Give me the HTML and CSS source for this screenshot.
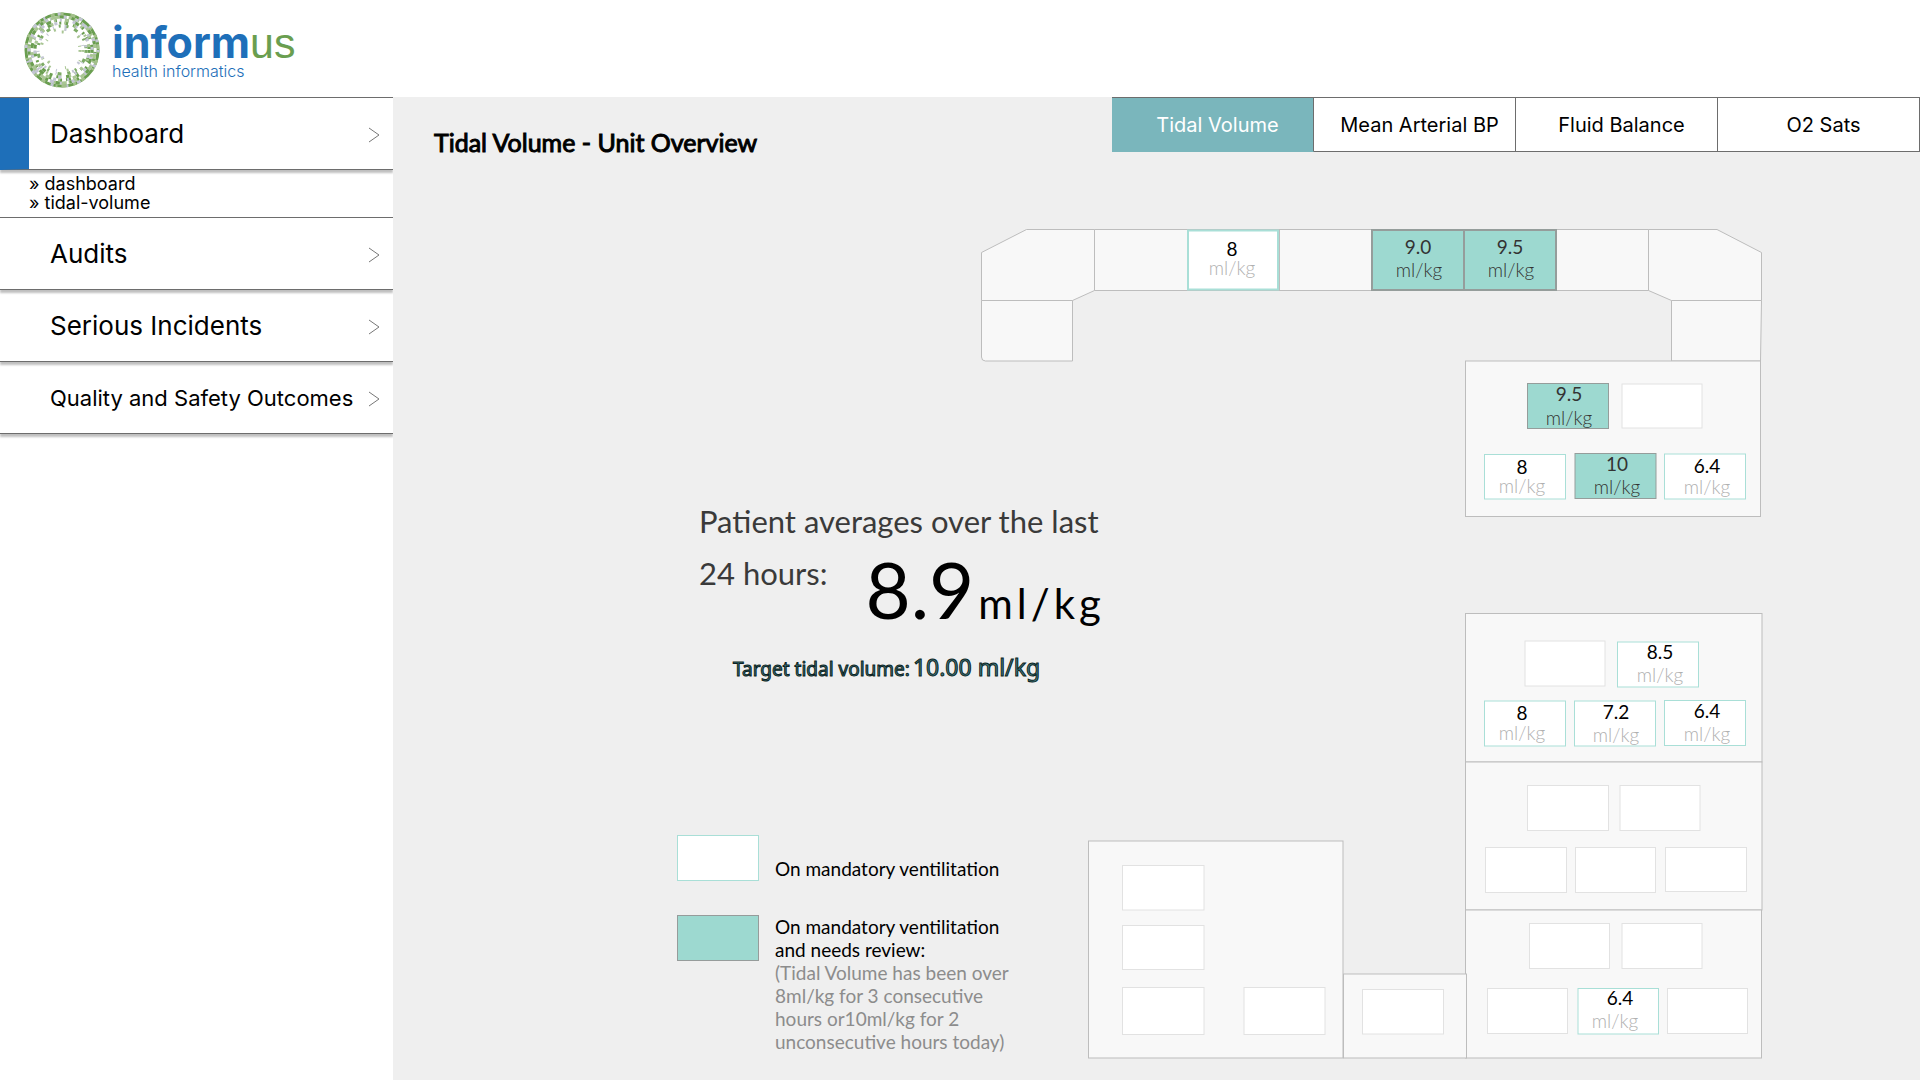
FILE: index.html
```html
<!DOCTYPE html>
<html lang="en">
<head>
<meta charset="utf-8">
<title>Informus - Tidal Volume</title>
<link rel="stylesheet" href="styles.css">
</head>
<body>
<header class="site-header">
  <a class="logo" href="#">
    <svg class="logo-mark" viewBox="-38 -38 76 76" width="76" height="76" aria-hidden="true">
      <g fill="none" stroke-width="3">
        <circle r="36" stroke="#6a9e50"/>
        <circle r="36" stroke="#a3c08b" stroke-dasharray="3 7 5 4 2 11 4 6"/>
        <circle r="36" stroke="#c3c6d4" stroke-dasharray="2 13 3 19 4 9"/>
        <circle r="33" stroke="#a9c594"/>
        <circle r="33" stroke="#c3c6d4" stroke-dasharray="4 9 3 5 6 12"/>
        <circle r="33" stroke="#6a9e50" stroke-dasharray="3 6 2 10 4 8"/>
        <circle r="33" stroke="#fff" stroke-dasharray="2 11 2 17"/>
        <circle r="30" stroke="#6a9e50" stroke-dasharray="3 6 5 4 2 9"/>
        <circle r="30" stroke="#a9c594" stroke-dasharray="2 9 4 13" stroke-dashoffset="7"/>
        <circle r="30" stroke="#c3c6d4" stroke-dasharray="3 17 2 11" stroke-dashoffset="13"/>
        <circle r="27" stroke="#6a9e50" stroke-dasharray="3 5 4 8 2 4"/>
        <circle r="27" stroke="#a9c594" stroke-dasharray="3 11 2 8" stroke-dashoffset="5"/>
        <circle r="27" stroke="#c3c6d4" stroke-dasharray="2 14 3 19" stroke-dashoffset="11"/>
        <circle r="24" stroke="#7dab66" stroke-dasharray="3 6 4 9 2 5"/>
        <circle r="24" stroke="#c3c6d4" stroke-dasharray="2 16 1 11" stroke-dashoffset="5"/>
        <circle r="21" stroke="#a9c594" stroke-dasharray="2 9 1 14 2 17"/>
        <circle r="21" stroke="#c3c6d4" stroke-dasharray="1 18 2 23" stroke-dashoffset="6"/>
        <circle r="18" stroke="#a9c594" stroke-dasharray="2 22 1 17"/>
      </g>
    </svg>
    <span class="logo-text">
      <span class="logo-name">inform<span class="logo-us">us</span></span>
      <span class="logo-tag">health informatics</span>
    </span>
  </a>
</header>
<div class="layout">
  <nav class="sidebar" aria-label="Main">
    <a class="nav-item active" href="#">Dashboard<svg class="chevron" viewBox="0 0 12 16"><path d="M1 1 11 8 1 15"/></svg></a>
    <div class="crumbs">
      <a href="#">» dashboard</a>
      <a href="#">» tidal-volume</a>
    </div>
    <a class="nav-item first" href="#">Audits<svg class="chevron" viewBox="0 0 12 16"><path d="M1 1 11 8 1 15"/></svg></a>
    <a class="nav-item" href="#">Serious Incidents<svg class="chevron" viewBox="0 0 12 16"><path d="M1 1 11 8 1 15"/></svg></a>
    <a class="nav-item small" href="#">Quality and Safety Outcomes<svg class="chevron" viewBox="0 0 12 16"><path d="M1 1 11 8 1 15"/></svg></a>
  </nav>
  <main class="content">
    <div class="topbar">
      <h1 class="title">Tidal Volume - Unit Overview</h1>
      <div class="tabs">
        <button class="tab selected" type="button">Tidal Volume</button>
        <button class="tab" type="button">Mean Arterial BP</button>
        <button class="tab" type="button">Fluid Balance</button>
        <button class="tab" type="button">O2 Sats</button>
      </div>
    </div>
    <div class="overview">
      <section class="side">
        <div class="summary">
          <p class="summary-line">Patient averages over the last</p>
          <div class="summary-row">
            <span class="summary-line">24 hours:</span>
            <span class="average">8.9<span class="average-unit">ml/kg</span></span>
          </div>
          <p class="target">Target tidal volume: <span class="target-value">10.00 ml/kg</span></p>
        </div>
        <div class="legend">
          <div class="legend-row">
            <span class="swatch"></span>
            <p class="legend-text single">On mandatory ventilitation</p>
          </div>
          <div class="legend-row">
            <span class="swatch review"></span>
            <p class="legend-text">On mandatory ventilitation and needs review:<br><span class="note">(Tidal Volume has been over 8ml/kg for 3 consecutive hours or10ml/kg for 2 unconsecutive hours today)</span></p>
          </div>
        </div>
      </section>
      <svg class="plan" viewBox="980 228 784 832" role="img" aria-label="Unit floor plan">
        <g class="room">
          <path d="M1026.500 229.500H1094.500V290.500L1072.500 300.500H981.500V252.500Z"/>
          <path d="M981.500 300.500H1072.500V361H985.500Q981.500 361 981.500 357Z"/>
          <path d="M1094.500 229.500H1648.500V290.500H1094.500ZM1187.500 229.500V290.500M1279.500 229.500V290.500M1371.500 229.500V290.500"/>
          <path d="M1648.500 229.500H1717L1761.500 252.500V300.500H1671.500L1648.500 290.500Z"/>
          <path d="M1671.500 300.500H1761.500L1760.500 361H1671.500Z"/>
          <rect x="1465.500" y="361" width="295" height="155.500"/>
          <rect x="1465.500" y="613.500" width="296.500" height="148.500"/>
          <rect x="1465.500" y="762" width="296.500" height="148"/>
          <rect x="1465.500" y="910" width="296" height="148"/>
          <rect x="1088.500" y="841" width="254.500" height="217"/>
          <rect x="1343.500" y="974" width="123" height="84"/>
        </g>
        <g class="bed">
          <rect x="1622" y="384" width="80" height="44"/>
          <rect x="1525" y="641" width="80" height="45"/>
          <rect x="1527.500" y="785.500" width="81" height="45"/>
          <rect x="1620" y="785.500" width="80" height="45"/>
          <rect x="1485.500" y="847.500" width="81" height="45"/>
          <rect x="1575.500" y="847.500" width="80" height="45"/>
          <rect x="1665.500" y="847.500" width="81" height="44"/>
          <rect x="1529.500" y="923.500" width="80" height="45"/>
          <rect x="1622" y="923.500" width="80" height="45"/>
          <rect x="1487.500" y="988.500" width="80" height="45"/>
          <rect x="1667.500" y="988.500" width="80" height="45"/>
          <rect x="1122.500" y="865.500" width="81.500" height="44.500"/>
          <rect x="1122.500" y="925.500" width="81.500" height="44"/>
          <rect x="1122.500" y="987.500" width="81.500" height="47"/>
          <rect x="1244" y="987.500" width="81" height="47"/>
          <rect x="1362.500" y="989.500" width="81" height="44.500"/>
        </g>
        <g class="bed on">
          <rect class="bay" x="1188" y="230.500" width="90" height="59"/>
          <rect x="1484.500" y="454.500" width="81" height="44.500"/>
          <rect x="1664.500" y="454" width="81" height="45"/>
          <rect x="1617.500" y="642" width="81" height="45"/>
          <rect x="1484.500" y="701" width="81" height="45"/>
          <rect x="1574.500" y="701" width="81" height="45"/>
          <rect x="1664.500" y="700.500" width="81" height="45"/>
          <rect x="1578" y="988.500" width="80.500" height="45.500"/>
        </g>
        <g class="bed needs-review">
          <rect class="bay" x="1372" y="230" width="92" height="60"/>
          <rect class="bay" x="1464" y="230" width="92" height="60"/>
          <rect x="1527.500" y="383.500" width="81" height="45"/>
          <rect x="1575" y="453.500" width="81" height="45"/>
        </g>
        <g class="reading">
          <text x="1232" y="256">8</text><text class="unit" x="1232" y="275">ml/kg</text>
          <text x="1522" y="474">8</text><text class="unit" x="1522" y="493">ml/kg</text>
          <text x="1707" y="473">6.4</text><text class="unit" x="1707" y="494">ml/kg</text>
          <text x="1660" y="659">8.5</text><text class="unit" x="1660" y="682">ml/kg</text>
          <text x="1522" y="720">8</text><text class="unit" x="1522" y="740">ml/kg</text>
          <text x="1616" y="719">7.2</text><text class="unit" x="1616" y="742">ml/kg</text>
          <text x="1707" y="718">6.4</text><text class="unit" x="1707" y="741">ml/kg</text>
          <text x="1620" y="1005">6.4</text><text class="unit" x="1615" y="1028">ml/kg</text>
        </g>
        <g class="reading high">
          <text x="1418" y="254">9.0</text><text class="unit" x="1419" y="277">ml/kg</text>
          <text x="1510" y="254">9.5</text><text class="unit" x="1511" y="277">ml/kg</text>
          <text x="1569" y="401">9.5</text><text class="unit" x="1569" y="425">ml/kg</text>
          <text x="1617" y="471">10</text><text class="unit" x="1617" y="494">ml/kg</text>
        </g>
      </svg>
    </div>
  </main>
</div>
</body>
</html>
```
FILE: styles.css
```css
* { box-sizing: border-box; }
body {
  margin: 0;
  min-height: 100vh;
  display: flex;
  flex-direction: column;
  background: #fff;
  color: #000;
  font-family: Inter, "Liberation Sans", sans-serif;
}
p, h1 { margin: 0; }
a { color: inherit; text-decoration: none; }

.site-header { height: 97px; padding: 12px 24px; }
.logo { display: inline-flex; gap: 12px; }
.logo-text { display: flex; flex-direction: column; color: #1e6fb9; padding-top: 8px; }
.logo-name { font-size: 43px; line-height: 44px; font-weight: 700; }
.logo-us { font-family: "Liberation Sans", sans-serif; font-weight: 400; color: #6a9e50; }
.logo-tag { font-size: 16px; line-height: 20px; font-weight: 300; margin-top: -4px; }

.layout { flex: 1; display: grid; grid-template-columns: 393px minmax(0, 1fr); }
.sidebar { border-top: 1px solid #6d6d6d; }
.nav-item {
  display: flex;
  align-items: center;
  justify-content: space-between;
  height: 72px;
  padding: 0 13px 0 50px;
  font-size: 26px;
  border-bottom: 1px solid #6d6d6d;
  box-shadow: 0 3px 2px #00000040;
}
.nav-item.active { border-left: 29px solid #1e6fb9; padding-left: 21px; }
.nav-item.first { height: 73px; border-top: 1px solid #6d6d6d; }
.nav-item.small { font-size: 22px; }
.chevron { width: 12px; height: 16px; margin-top: 2px; fill: none; stroke: #777; }
.crumbs {
  display: flex;
  flex-direction: column;
  padding: 4px 0 5px 29px;
  font-size: 18px;
  line-height: 19px;
}

.content { background: #efefef; }
.topbar { display: flex; justify-content: space-between; align-items: flex-start; height: 131px; }
.title {
  padding: 29px 0 0 41px;
  font: 400 25px/32px Lato, sans-serif;
  -webkit-text-stroke: 1px #000;
}
.tabs { display: flex; width: 808px; border-top: 1px solid #6d6d6d; }
.tab {
  flex: 1;
  height: 54px;
  padding: 0 0 0 10px;
  font: 20px Inter, sans-serif;
  color: #000;
  background: #fff;
  border: solid #6d6d6d;
  border-width: 0 1px 1px 0;
}
.tab.selected { background: #7ab6bc; color: #fff; border-bottom-color: #7ab6bc; }

.overview { display: grid; grid-template-columns: 587fr 784fr 156fr; font-family: Lato, sans-serif; }
.plan { grid-area: 1 / 2; width: 100%; display: block; }
.side {
  grid-area: 1 / 1 / 2 / 3;
  display: flex;
  flex-direction: column;
  justify-content: space-between;
  padding: 267px 0 7px 284px;
}
.summary { padding-left: 22px; }
.summary-line { font-size: 31px; line-height: 52px; color: #3a3a3a; }
.summary-row { display: flex; align-items: flex-start; gap: 38px; }
.average { font-size: 78px; line-height: 84px; }
.average-unit { font-size: 42px; letter-spacing: 4px; margin-left: 4px; }
.target {
  display: flex;
  align-items: baseline;
  gap: 3px;
  padding: 6px 0 0 34px;
  font: 19px/32px "Noto Sans", sans-serif;
  color: #3f8085;
  -webkit-text-stroke: 1px #0d1f22;
}
.target-value { font-size: 23px; }

.legend { display: flex; flex-direction: column; gap: 34px; }
.legend-row { display: flex; gap: 16px; align-items: flex-start; }
.swatch { flex: none; width: 82px; height: 46px; background: #fff; border: 1px solid #a9dfd7; }
.swatch.review { background: #9dd9d0; border-color: #969c9b; }
.legend-text { width: 250px; font-size: 19px; line-height: 23px; }
.legend-text.single { padding-top: 22px; }
.note { color: #8c8c8c; }

.room { fill: #f8f8f8; stroke: #bdbdbd; }
.bed { fill: #fff; stroke: #e2e2e2; }
.bed.on { stroke: #a9dfd7; }
.bed.needs-review { fill: #9dd9d0; stroke: #959d9b; }
.bed .bay { stroke-width: 2px; }
.reading { font-size: 19px; text-anchor: middle; fill: #000; }
.reading.high { fill: #333; }
.unit { font-weight: 300; fill: #b0b0b0; }
.reading.high .unit { fill: #333; }
```
